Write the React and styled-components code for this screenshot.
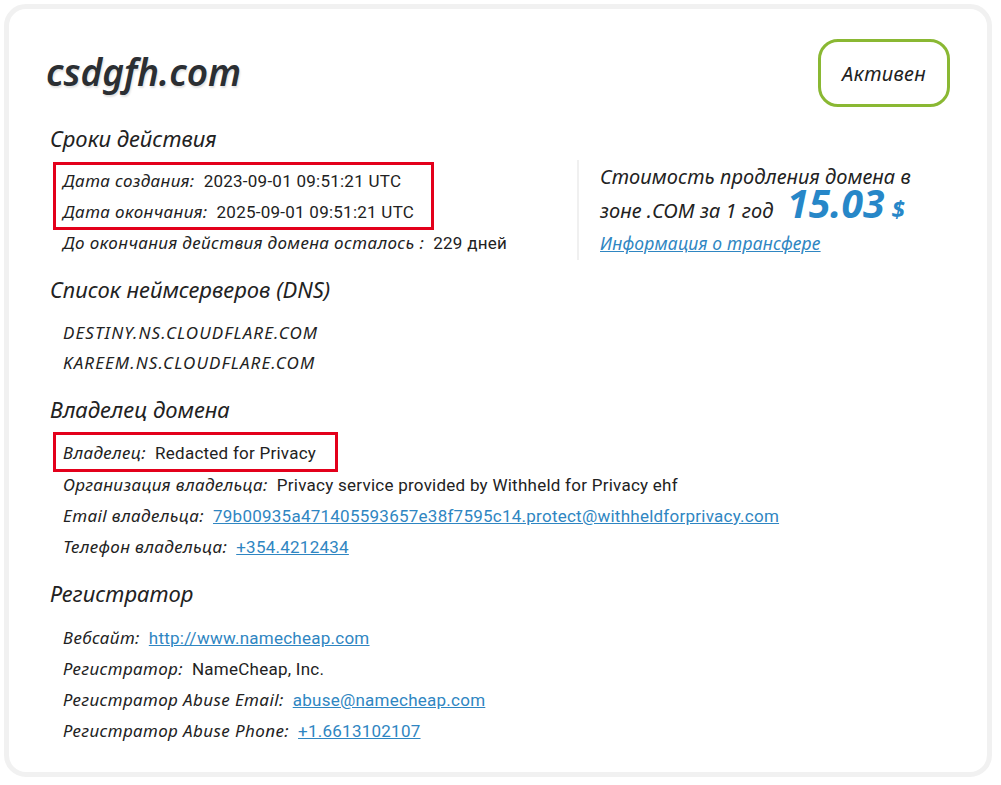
import React from 'react';
import styled, { createGlobalStyle } from 'styled-components';

const GlobalStyle = createGlobalStyle`
    html, body {
        margin: 0;
        padding: 0;
        background: #ffffff;
    }
    body {
        font-family: "Noto Sans", sans-serif;
        color: #222;
    }
`;

const Card = styled.div`
    box-sizing: border-box;
    width: 988px;
    height: 773px;
    margin: 4px 0 0 4px;
    border: 5px solid #f1f1f1;
    border-radius: 22px;
    background: #fff;
    padding: 29px 37px 26px 41px;
`;

const Header = styled.div`
    display: flex;
    align-items: center;
    justify-content: space-between;
    height: 68px;
    margin-top: 1px;
`;

const DomainTitle = styled.h1`
    margin: -3px 0 0 -4px;
    font-family: "Noto Sans", sans-serif;
    font-style: italic;
    font-weight: 600;
    font-size: 37px;
    letter-spacing: 0;
    color: #2b2f33;
    text-shadow: 1px 2px 2px rgba(0, 0, 0, 0.12);
`;

const StatusBadge = styled.div`
    box-sizing: border-box;
    width: 132px;
    height: 68px;
    display: flex;
    align-items: center;
    justify-content: center;
    border: 3px solid #8ab833;
    border-radius: 20px;
    font-style: italic;
    font-size: 20px;
    letter-spacing: 0.3px;
    color: #222;
`;

const Heading = styled.h2`
    margin: ${p => p.$top}px 0 ${p => p.$bottom}px;
    height: 28px;
    line-height: 28px;
    font-style: italic;
    font-weight: 400;
    font-size: 22px;
    color: #222;
`;

const TermsRow = styled.div`
    display: flex;
    align-items: flex-start;
`;

const TermsList = styled.div`
    width: 527px;
`;

const Row = styled.div`
    height: 31px;
    line-height: 31px;
    padding-left: 13px;
    font-size: 16px;
    white-space: nowrap;
`;

const NsItem = styled.div`
    height: 30px;
    line-height: 30px;
    padding-left: 13px;
    font-style: italic;
    font-size: 17px;
    letter-spacing: 1.1px;
    color: #222;
`;

const Label = styled.span`
    font-style: italic;
    font-size: 17px;
    letter-spacing: 0.4px;
    color: #222;
    margin-right: 9px;
`;

const Value = styled.span`
    font-family: Roboto, "Liberation Sans", sans-serif;
    font-size: 17px;
    letter-spacing: 0.25px;
    color: #222;
`;

const Link = styled.a`
    font-family: Roboto, "Liberation Sans", sans-serif;
    font-size: 17px;
    letter-spacing: 0.25px;
    color: #2f86c2;
    text-decoration: underline;
`;

const Highlight = styled.div`
    display: inline-block;
    margin: 0 0 -3px 3px;
    padding: ${p => (p.$single ? '2px 19px 1px 7px' : '0 17px 0 7px')};
    border: 3px solid #e3001b;
    ${Row} {
        padding-left: 0;
    }
`;

const PricePanel = styled.div`
    border-left: 2px solid #f0f0f0;
    padding: 0 0 2px 21px;
    margin-top: -2px;
`;

const PriceLine = styled.div`
    height: 34px;
    line-height: 34px;
    font-style: italic;
    font-size: 20px;
    letter-spacing: 0.05px;
    color: #222;
    white-space: nowrap;
`;

const Price = styled.span`
    font-weight: 700;
    font-size: 39px;
    line-height: 0;
    letter-spacing: 0;
    color: #2787c8;
    margin-left: 14px;
`;

const Currency = styled.span`
    font-weight: 700;
    font-size: 24px;
    line-height: 0;
    color: #2787c8;
    margin-left: 7px;
`;

const TransferLink = styled.a`
    display: block;
    line-height: 30px;
    font-style: italic;
    font-size: 17.5px;
    letter-spacing: 0.2px;
    color: #2f86c2;
    text-decoration: underline;
`;

const App = () => {
    return (
        <>
            <GlobalStyle />
            <Card>
                <Header>
                    <DomainTitle>csdgfh.com</DomainTitle>
                    <StatusBadge>Активен</StatusBadge>
                </Header>

                <Heading $top={17} $bottom={10}>Сроки действия</Heading>
                <TermsRow>
                    <TermsList>
                        <Highlight>
                            <Row><Label>Дата создания:</Label><Value>2023-09-01 09:51:21 UTC</Value></Row>
                            <Row><Label>Дата окончания:</Label><Value>2025-09-01 09:51:21 UTC</Value></Row>
                        </Highlight>
                        <Row><Label>До окончания действия домена осталось :</Label><Value>229 дней</Value></Row>
                    </TermsList>
                    <PricePanel>
                        <PriceLine>Стоимость продления домена в</PriceLine>
                        <PriceLine>
                            зоне .COM за 1 год<Price>15.03</Price><Currency>$</Currency>
                        </PriceLine>
                        <TransferLink href="#">Информация о трансфере</TransferLink>
                    </PricePanel>
                </TermsRow>

                <Heading $top={15} $bottom={15}>Список неймсерверов (DNS)</Heading>
                <NsItem>DESTINY.NS.CLOUDFLARE.COM</NsItem>
                <NsItem>KAREEM.NS.CLOUDFLARE.COM</NsItem>

                <Heading $top={17} $bottom={9}>Владелец домена</Heading>
                <Highlight $single>
                    <Row><Label>Владелец:</Label><Value>Redacted for Privacy</Value></Row>
                </Highlight>
                <Row><Label>Организация владельца:</Label><Value>Privacy service provided by Withheld for Privacy ehf</Value></Row>
                <Row><Label>Email владельца:</Label><Link href="#">79b00935a471405593657e38f7595c14.protect@withheldforprivacy.com</Link></Row>
                <Row><Label>Телефон владельца:</Label><Link href="#">+354.4212434</Link></Row>

                <Heading $top={17} $bottom={15}>Регистратор</Heading>
                <Row><Label>Вебсайт:</Label><Link href="#">http://www.namecheap.com</Link></Row>
                <Row><Label>Регистратор:</Label><Value>NameCheap, Inc.</Value></Row>
                <Row><Label>Регистратор Abuse Email:</Label><Link href="#">abuse@namecheap.com</Link></Row>
                <Row><Label>Регистратор Abuse Phone:</Label><Link href="#">+1.6613102107</Link></Row>
            </Card>
        </>
    );
};

export default App;
